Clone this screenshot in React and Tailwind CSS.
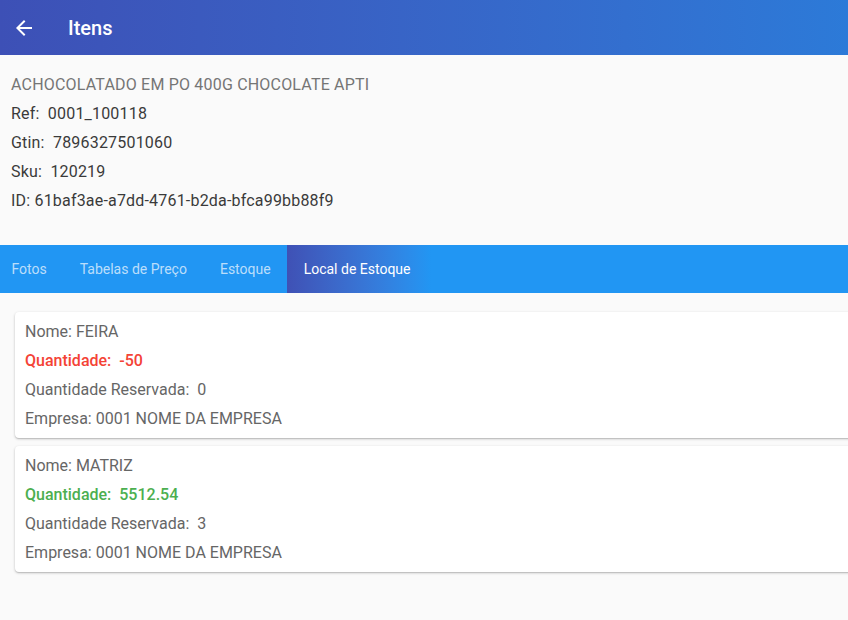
import React from 'react';

const locais = [
  { nome: 'FEIRA', quantidade: '-50', reservada: '0', empresa: '0001 NOME DA EMPRESA', negativo: true },
  { nome: 'MATRIZ', quantidade: '5512.54', reservada: '3', empresa: '0001 NOME DA EMPRESA', negativo: false },
];

const tabs = ['Fotos', 'Tabelas de Preço', 'Estoque', 'Local de Estoque'];

function LocalCard({ local }) {
  return (
    <div className="w-[900px] bg-white rounded shadow-[0_1px_3px_rgba(0,0,0,0.2),0_1px_1px_rgba(0,0,0,0.12)] py-[5px] px-[10px] text-[16px] text-[#666666]">
      <div className="h-[29px] leading-[29px]">Nome: {local.nome}</div>
      <div
        className={
          'h-[29px] leading-[29px] font-medium ' +
          (local.negativo ? 'text-[#f44336]' : 'text-[#4caf50]')
        }
      >
        Quantidade:&nbsp; {local.quantidade}
      </div>
      <div className="h-[29px] leading-[29px]">Quantidade Reservada:&nbsp; {local.reservada}</div>
      <div className="h-[29px] leading-[29px]">Empresa: {local.empresa}</div>
    </div>
  );
}

export default function App() {
  return (
    <div className="w-[848px] h-[620px] overflow-hidden bg-[#fafafa] font-['Roboto',sans-serif]">
      <header className="h-[55px] flex items-center bg-gradient-to-r from-[#3d50b6] to-[#2c7ad8] text-white">
        <svg className="ml-[12px] w-6 h-6" viewBox="0 0 24 24" fill="currentColor">
          <path d="M20 11H7.83l5.59-5.59L12 4l-8 8 8 8 1.41-1.41L7.83 13H20v-2z" />
        </svg>
        <h1 className="ml-[32px] text-[20px] font-medium">Itens</h1>
      </header>

      <section className="pt-[15px] pb-[30px] px-[11px] text-[16px] tracking-[0.19px] text-[#3a3a3a]">
        <div className="h-[29px] leading-[29px] text-[#757575]">ACHOCOLATADO EM PO 400G CHOCOLATE APTI</div>
        <div className="h-[29px] leading-[29px]">Ref:&nbsp; 0001_100118</div>
        <div className="h-[29px] leading-[29px]">Gtin:&nbsp; 7896327501060</div>
        <div className="h-[29px] leading-[29px]">Sku:&nbsp; 120219</div>
        <div className="h-[29px] leading-[29px]">ID: 61baf3ae-a7dd-4761-b2da-bfca99bb88f9</div>
      </section>

      <nav className="h-[48px] bg-[#2196f3] flex -ml-[5px] text-[14px]">
        {tabs.map((t, i) => {
          const active = i === tabs.length - 1;
          return (
            <div
              key={t}
              className={
                'h-full flex items-center px-[16.5px] ' +
                (active
                  ? 'text-white bg-gradient-to-r from-[#3f51b5] to-[#2196f3] pr-5'
                  : 'text-white/70')
              }
            >
              {t}
            </div>
          );
        })}
      </nav>

      <div className="pt-[19px] pl-[15px] flex flex-col gap-[8px]">
        {locais.map((l) => (
          <LocalCard key={l.nome} local={l} />
        ))}
      </div>
    </div>
  );
}
